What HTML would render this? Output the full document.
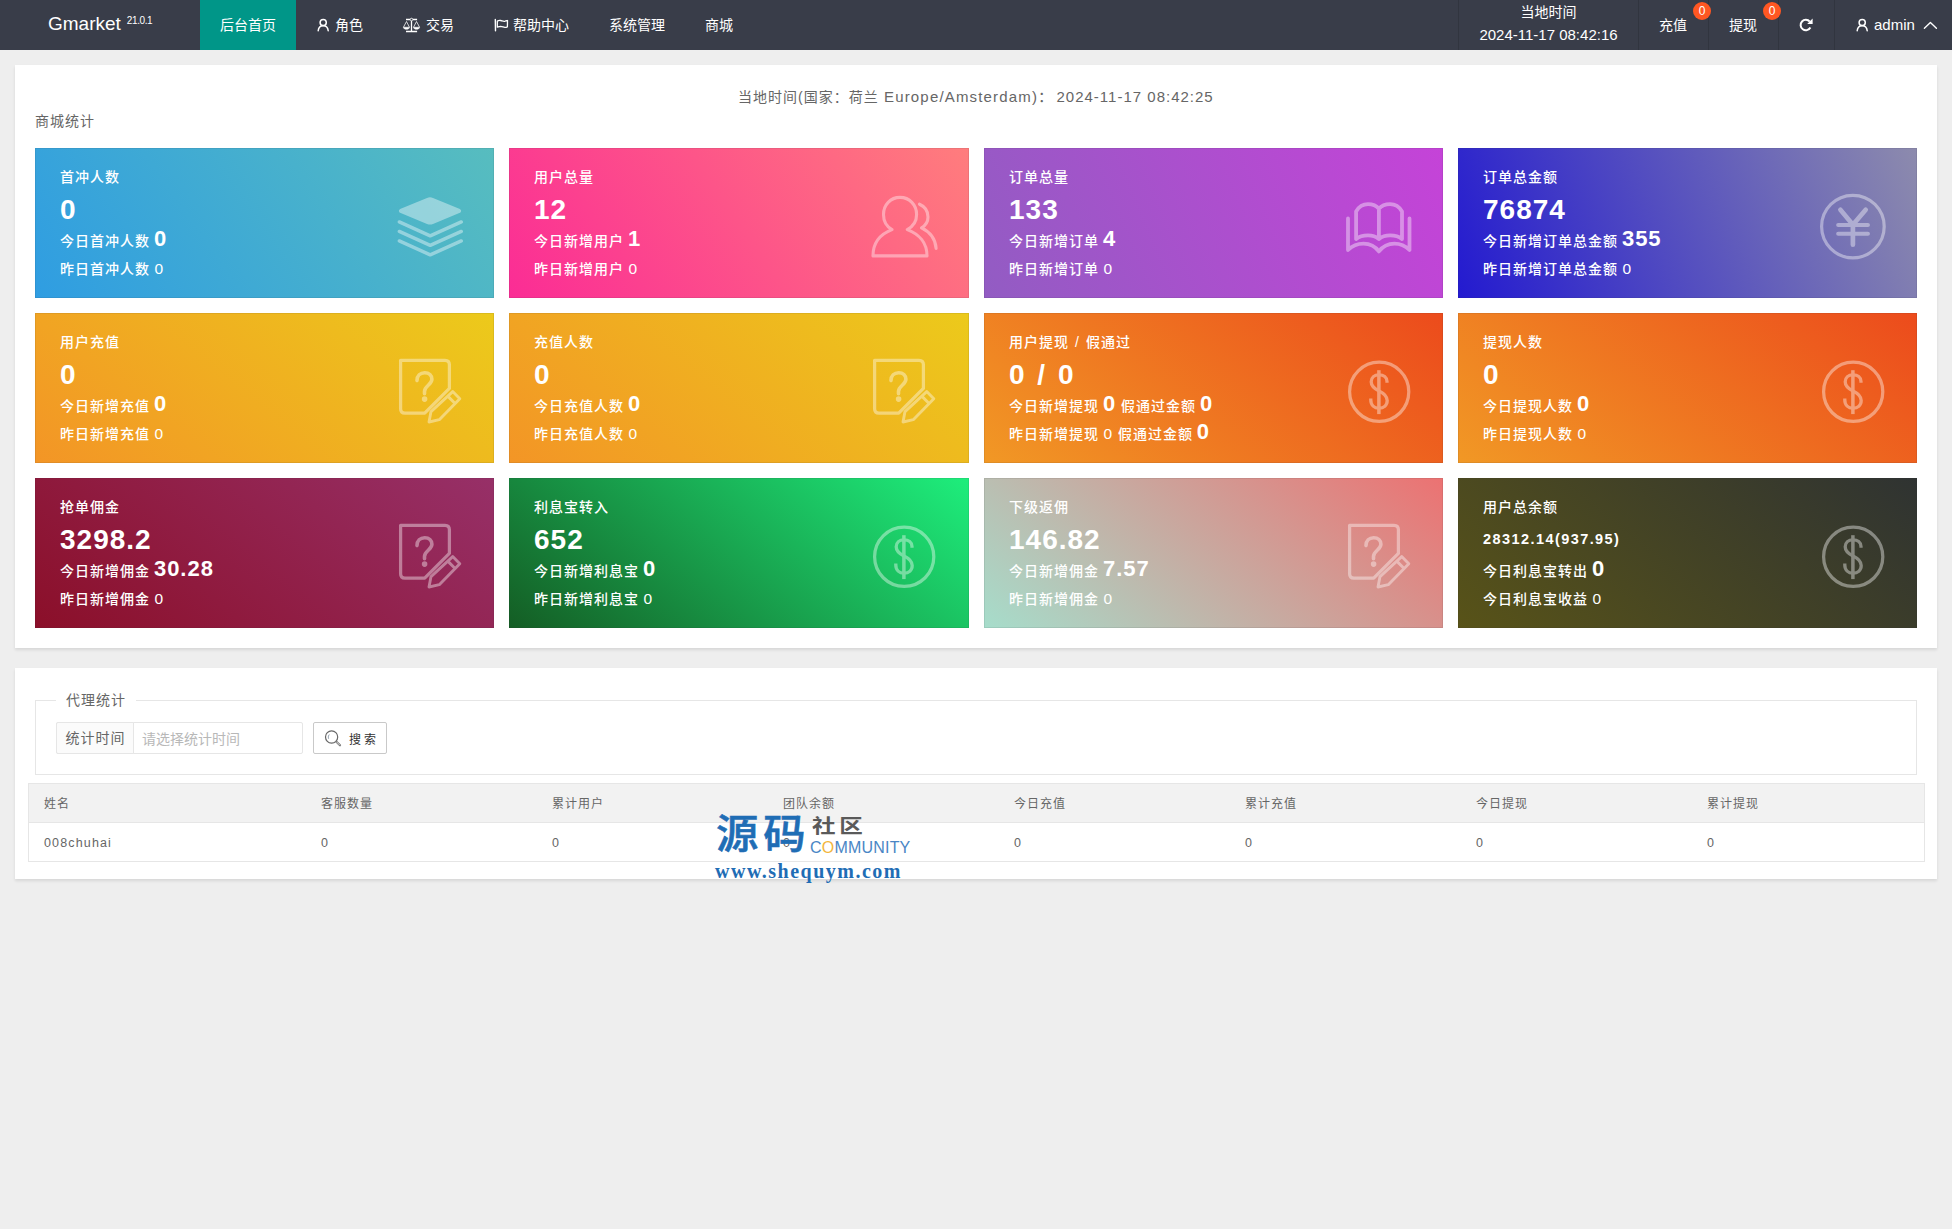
<!DOCTYPE html>
<html lang="zh-CN">
<head>
<meta charset="utf-8">
<title>Gmarket</title>
<style>
*{box-sizing:border-box;margin:0;padding:0}
html,body{width:1952px;height:1229px;overflow:hidden}
body{background:#eeeeee;font-family:"Liberation Sans","Noto Sans CJK SC",sans-serif;font-size:14px;color:#666;position:relative;letter-spacing:1px}
.abs{position:absolute}
/* header */
#hd{position:absolute;left:0;top:0;width:1952px;height:50px;background:#393d49;color:#fff;letter-spacing:0}
#hd .logo{position:absolute;left:48px;top:0;height:50px;line-height:48px;font-size:19px;color:#fff;white-space:nowrap}
#hd .logo sup{font-size:10px;letter-spacing:-.4px;position:relative;top:-6.500px;left:6px;vertical-align:baseline}
#hd .nav{position:absolute;top:0;height:50px;line-height:50px;font-size:14px;color:#fff;white-space:nowrap}
#hd .nav.on{background:#009688;left:200px;width:96px;text-align:center}
#hd .nav svg{position:absolute;top:17px}
#hd .sep{position:absolute;top:0;width:1px;height:50px;background:#31353f}
#hd .badge{position:absolute;top:2px;width:18px;height:18px;border-radius:9px;background:#ff5722;color:#fff;font-size:12px;line-height:18px;text-align:center}
/* panels */
.panel{position:absolute;left:15px;width:1922px;background:#fff;box-shadow:0 2px 3px rgba(0,0,0,.1)}
/* cards */
.card{position:absolute;height:150px;color:#fff;font-weight:500;font-size:14px;box-shadow:inset 0 0 0 1px rgba(45,45,60,.09);letter-spacing:1px;white-space:nowrap;overflow:hidden}
.card .t{position:absolute;left:25px;top:18px;line-height:22px;word-spacing:1.200px}
.card .n{position:absolute;left:25px;top:45px;line-height:34px;font-size:28px;font-weight:bold;word-spacing:3px}
.card .a{position:absolute;left:25px;top:78.5px;line-height:28px}
.card .b{position:absolute;left:25px;top:109px;line-height:24px}
.card b{font-size:22px;font-weight:bold;margin-left:-1px;line-height:0}
.card i{font-style:normal;font-weight:400;font-size:15.500px;margin-left:-.5px;position:relative;top:-.5px}
.card svg{position:absolute;left:355px;top:40px;width:80px;height:80px;opacity:.4}
.card .n.s{font-size:14.500px;letter-spacing:1.430px;top:43.500px}
.th,.td{position:absolute;font-size:12px;letter-spacing:1px;white-space:nowrap;color:#666}
.th{top:0;line-height:41px}
.td{top:40px;line-height:38px;font-size:12.500px;letter-spacing:1.150px}
</style>
</head>
<body>
<div id="hd">
  <div class="logo">Gmarket<sup>21.0.1</sup></div>
  <div class="nav on">后台首页</div>
  <div class="nav" style="left:335px">角色</div>
  <div class="nav" style="left:426px">交易</div>
  <div class="nav" style="left:513px">帮助中心</div>
  <div class="nav" style="left:609px">系统管理</div>
  <div class="nav" style="left:705px">商城</div>
  <svg class="abs" style="left:316px;top:17px" width="15" height="16" viewBox="0 0 15 16" fill="none" stroke="#fff" stroke-width="1.5" stroke-linecap="round"><circle cx="7.200" cy="5.500" r="3.100"/><path d="M2.200 13.700c.3-3.200 2.100-4.900 5-4.900s4.700 1.700 5 4.900"/></svg>
  <svg class="abs" style="left:402px;top:17px" width="20" height="17" viewBox="0 0 20 17" fill="none" stroke="#fff" stroke-linejoin="round"><path d="M4 2.500h4M11 2.500h4.100M9.500 3.900v10.500M4 14.500h11.100" stroke-width="1.300"/><circle cx="9.500" cy="2.500" r="1.250" stroke-width=".9"/><path d="M1.500 10.100 4.500 4.500 7.400 10.100M11.600 10.100 14.500 4.500 17.500 10.100" stroke-width=".85" stroke-opacity=".9"/><path d="M1.300 10.200h6.300c-.3 1.400-1.400 2.100-3.150 2.100s-2.850-.7-3.150-2.100zM11.400 10.200h6.300c-.3 1.400-1.400 2.100-3.150 2.100s-2.850-.7-3.150-2.100z" fill="#fff" stroke-width=".5"/></svg>
  <svg class="abs" style="left:493px;top:17px" width="17" height="16" viewBox="0 0 17 16" fill="none" stroke="#fff" stroke-width="1.300" stroke-linecap="round" stroke-linejoin="round"><path d="M2.300 2.500 2.500 13.700" stroke-width="1.400"/><path d="M4.300 4.100c1.200-.7 2.500-.8 3.400-.6 1.800.5 2.800 1.100 4 .8 1.100-.2 2.100-.6 2.800-.8l-.1 6.300c-.9.400-1.600.7-2.500.6-1.400-.1-2.600-.9-4.200-1-1.200 0-2.400.4-3.400.8z"/></svg>
  <div class="sep" style="left:1458px"></div>
  <div class="sep" style="left:1638px"></div>
  <div class="sep" style="left:1708px"></div>
  <div class="sep" style="left:1778px"></div>
  <div class="sep" style="left:1834px"></div>
  <div class="abs" style="left:1459px;top:0;width:179px;text-align:center;font-size:14px;line-height:24px">当地时间</div>
  <div class="abs" style="left:1459px;top:23px;width:179px;text-align:center;font-size:15px;line-height:24px;white-space:nowrap">2024-11-17 08:42:16</div>
  <div class="nav" style="left:1659px">充值</div>
  <div class="badge" style="left:1693px">0</div>
  <div class="nav" style="left:1729px">提现</div>
  <div class="badge" style="left:1763px">0</div>
  <svg class="abs" style="left:1798px;top:17px" width="16" height="16" viewBox="0 0 16 16" fill="none" stroke="#fff" stroke-width="2" stroke-linecap="butt"><path d="M12.400 10.500a5.200 5.200 0 1 1-.6-5.800"/><path d="M14.600 1.600v5.400h-5.400z" fill="#fff" stroke="none"/></svg>
  <svg class="abs" style="left:1855px;top:17px" width="15" height="16" viewBox="0 0 15 16" fill="none" stroke="#fff" stroke-width="1.5" stroke-linecap="round"><circle cx="7.200" cy="5.500" r="3.100"/><path d="M2.200 13.700c.3-3.200 2.100-4.900 5-4.900s4.700 1.700 5 4.900"/></svg>
  <div class="nav" style="left:1874px;font-size:15px">admin</div>
  <svg class="abs" style="left:1923px;top:21px" width="15" height="9" viewBox="0 0 15 9" fill="none" stroke="#fff" stroke-width="1.400" stroke-linecap="round" stroke-linejoin="round"><path d="M1.400 7.300l6-5.700 6 5.700"/></svg>
</div>
<div class="panel" style="top:65px;height:583px"></div>
<div class="abs" id="lt1" style="left:738px;top:84px;line-height:26px;white-space:nowrap">当地时间(国家：荷兰</div>
<div class="abs" id="lt2" style="left:884px;top:84px;line-height:26px;white-space:nowrap;font-size:15px;letter-spacing:1.170px">Europe/Amsterdam)：</div>
<div class="abs" id="lt3" style="left:1056.500px;top:84px;line-height:26px;white-space:nowrap;font-size:15px;letter-spacing:1px">2024-11-17 08:42:25</div>
<div class="abs" style="left:35px;top:110px;line-height:22px" id="sec1">商城统计</div>
<div class="card" style="left:35px;top:148px;width:459px;background:linear-gradient(-125deg,#57bdbf,#2f9de2)"><div class="t">首冲人数</div><div class="n">0</div><div class="a">今日首冲人数 <b>0</b></div><div class="b">昨日首冲人数 <i>0</i></div><svg viewBox="0 0 80 80"><path d="M10.700 20.700 37 9.900c2-.8 4-.8 6 0l26.300 10.800c2.400 1 2.400 3.400 0 4.400L43 36c-2 .8-4 .8-6 0L10.700 25.100c-2.400-1-2.400-3.400 0-4.400z" fill="#fff"/><path d="M9.300 33.900 40.200 47.900 71.300 33.900M9.300 43.400 40.200 57.400 71.300 43.400M9.300 52.900 40.200 66.900 71.300 52.900" fill="none" stroke="#fff" stroke-width="3.400" stroke-linecap="round" stroke-linejoin="round"/></svg></div>
<div class="card" style="left:509px;top:148px;width:460px;background:linear-gradient(-125deg,#ff7d7d,#fb2c95)"><div class="t">用户总量</div><div class="n">12</div><div class="a">今日新增用户 <b>1</b></div><div class="b">昨日新增用户 <i>0</i></div><svg viewBox="0 0 80 80"><g fill="none" stroke="#fff" stroke-width="3.100" stroke-linecap="round" stroke-linejoin="round"><path d="M28 41.600C22.500 38.500 19.500 33 19.500 26.500 19.500 17 26.500 9.400 36 9.400s16.600 7.600 16.600 17.100c0 6.500-3.600 12-9.300 15.100C55 46 63 55 63 67.900H9C9 55 16.500 46 28 41.600z"/><path d="M55.500 16.200C61 18.500 64 23 64 29c0 4.500-2.500 8.500-6.500 10.900 8.500 4.100 14 11.100 14.600 20.500"/></g></svg></div>
<div class="card" style="left:984px;top:148px;width:459px;background:linear-gradient(-113deg,#c543d8,#925cc3)"><div class="t">订单总量</div><div class="n">133</div><div class="a">今日新增订单 <b>4</b></div><div class="b">昨日新增订单 <i>0</i></div><svg viewBox="0 0 80 80"><g fill="none" stroke="#fff" stroke-width="3.800" stroke-linecap="round" stroke-linejoin="round"><path d="M17.100 51V23.500c2.900-5 7.400-7.300 11.900-7.300s8.400 1.500 10.900 4.600V51c-3-2.500-6.400-3.600-10.900-3.600S20.100 48.500 17.100 51zM63 51V23.500c-2.900-5-7.400-7.300-11.900-7.300s-8.600 1.500-11.200 4.600M39.900 51c3-2.500 6.700-3.600 11.200-3.600S60 48.500 63 51"/><path d="M9 30.500V62c4.500-4.500 10-6.400 15.500-6.400 6.500 0 11.500 2.400 15.400 7.800 4.100-5.400 9.100-7.800 15.600-7.800 5.500 0 10.500 1.900 15 6.400V30.500"/></g></svg></div>
<div class="card" style="left:1458px;top:148px;width:459px;background:linear-gradient(-112deg,#8d8bad,#231ad0)"><div class="t">订单总金额</div><div class="n">76874</div><div class="a">今日新增订单总金额 <b>355</b></div><div class="b">昨日新增订单总金额 <i>0</i></div><svg viewBox="0 0 80 80"><g fill="none" stroke="#fff" stroke-linecap="round" stroke-linejoin="round"><circle cx="39.900" cy="38.600" r="31.300" stroke-width="3.200"/><path d="M27.400 21.700 39.900 36.700 52.700 21.700M39.900 36.700V56.700" stroke-width="4.700"/><path d="M25.200 37H54.900M25.200 45.800H54.900" stroke-width="4.100"/></g></svg></div>
<div class="card" style="left:35px;top:313px;width:459px;background:linear-gradient(-141deg,#ecca1b,#f39526)"><div class="t">用户充值</div><div class="n">0</div><div class="a">今日新增充值 <b>0</b></div><div class="b">昨日新增充值 <i>0</i></div><svg viewBox="0 0 80 80"><g fill="none" stroke="#fff" stroke-linejoin="round"><path d="M10.600 7.400H55c2.900 0 4.400 1.500 4.400 4.400V35.400L34.700 60.100H15c-2.900 0-4.400-1.500-4.400-4.400z" stroke-width="3.250"/><path d="M27 27.600c0-4.800 3.300-7.800 7.700-7.800s7.200 2.800 7.200 6.500c0 5.500-7.400 6.500-7.400 12.200v2.300" stroke-width="3.600" stroke-linecap="round"/><path d="M62.700 38.600 69.800 45.800 49.300 66.700 39 69l2-10.400zM58 43.400l7.100 7.100" stroke-width="2.900"/></g><circle cx="34.600" cy="46.100" r="2.800" fill="#fff"/></svg></div>
<div class="card" style="left:509px;top:313px;width:460px;background:linear-gradient(-141deg,#ecca1b,#f39526)"><div class="t">充值人数</div><div class="n">0</div><div class="a">今日充值人数 <b>0</b></div><div class="b">昨日充值人数 <i>0</i></div><svg viewBox="0 0 80 80"><g fill="none" stroke="#fff" stroke-linejoin="round"><path d="M10.600 7.400H55c2.900 0 4.400 1.500 4.400 4.400V35.400L34.700 60.100H15c-2.900 0-4.400-1.500-4.400-4.400z" stroke-width="3.250"/><path d="M27 27.600c0-4.800 3.300-7.800 7.700-7.800s7.200 2.800 7.200 6.500c0 5.500-7.400 6.500-7.400 12.200v2.300" stroke-width="3.600" stroke-linecap="round"/><path d="M62.700 38.600 69.800 45.800 49.300 66.700 39 69l2-10.400zM58 43.400l7.100 7.100" stroke-width="2.900"/></g><circle cx="34.600" cy="46.100" r="2.800" fill="#fff"/></svg></div>
<div class="card" style="left:984px;top:313px;width:459px;background:linear-gradient(-141deg,#ec4b1c,#f19825)"><div class="t">用户提现 / 假通过</div><div class="n">0 / 0</div><div class="a">今日新增提现 <b>0</b> 假通过金额 <b>0</b></div><div class="b">昨日新增提现 <i>0</i> 假通过金额 <b>0</b></div><svg viewBox="0 0 80 80"><g fill="none" stroke="#fff"><circle cx="40.200" cy="38.800" r="29.600" stroke-width="3.250"/><path d="M39.900 17.200V61.100" stroke-width="3.500"/><path d="M48 29.700v-1.200C48 24.300 44.500 21.800 40 21.800s-7.800 2.700-7.800 7c0 4.700 3.300 7 7.800 9.200s8.200 4.500 8.200 9.500c0 4.800-3.700 7.700-8.200 7.700s-8.200-2.900-8.200-8.200v-1.500" stroke-width="3.300"/></g></svg></div>
<div class="card" style="left:1458px;top:313px;width:459px;background:linear-gradient(-141deg,#ec4b1c,#f19825)"><div class="t">提现人数</div><div class="n">0</div><div class="a">今日提现人数 <b>0</b></div><div class="b">昨日提现人数 <i>0</i></div><svg viewBox="0 0 80 80"><g fill="none" stroke="#fff"><circle cx="40.200" cy="38.800" r="29.600" stroke-width="3.250"/><path d="M39.900 17.200V61.100" stroke-width="3.500"/><path d="M48 29.700v-1.200C48 24.300 44.500 21.800 40 21.800s-7.800 2.700-7.800 7c0 4.700 3.300 7 7.800 9.200s8.200 4.500 8.200 9.500c0 4.800-3.700 7.700-8.200 7.700s-8.200-2.900-8.200-8.200v-1.500" stroke-width="3.300"/></g></svg></div>
<div class="card" style="left:35px;top:478px;width:459px;background:linear-gradient(-141deg,#973068,#8b0f29)"><div class="t">抢单佣金</div><div class="n">3298.2</div><div class="a">今日新增佣金 <b>30.28</b></div><div class="b">昨日新增佣金 <i>0</i></div><svg viewBox="0 0 80 80"><g fill="none" stroke="#fff" stroke-linejoin="round"><path d="M10.600 7.400H55c2.900 0 4.400 1.500 4.400 4.400V35.400L34.700 60.100H15c-2.900 0-4.400-1.500-4.400-4.400z" stroke-width="3.250"/><path d="M27 27.600c0-4.800 3.300-7.800 7.700-7.800s7.200 2.800 7.200 6.500c0 5.500-7.400 6.500-7.400 12.200v2.300" stroke-width="3.600" stroke-linecap="round"/><path d="M62.700 38.600 69.800 45.800 49.300 66.700 39 69l2-10.400zM58 43.400l7.100 7.100" stroke-width="2.900"/></g><circle cx="34.600" cy="46.100" r="2.800" fill="#fff"/></svg></div>
<div class="card" style="left:509px;top:478px;width:460px;background:linear-gradient(-141deg,#1eee7c,#145d24)"><div class="t">利息宝转入</div><div class="n">652</div><div class="a">今日新增利息宝 <b>0</b></div><div class="b">昨日新增利息宝 <i>0</i></div><svg viewBox="0 0 80 80"><g fill="none" stroke="#fff"><circle cx="40.200" cy="38.800" r="29.600" stroke-width="3.250"/><path d="M39.900 17.200V61.100" stroke-width="3.500"/><path d="M48 29.700v-1.200C48 24.300 44.500 21.800 40 21.800s-7.800 2.700-7.800 7c0 4.700 3.300 7 7.800 9.200s8.200 4.500 8.200 9.500c0 4.800-3.700 7.700-8.200 7.700s-8.200-2.900-8.200-8.200v-1.500" stroke-width="3.300"/></g></svg></div>
<div class="card" style="left:984px;top:478px;width:459px;background:linear-gradient(-141deg,#ec7272,#a6ddcb)"><div class="t">下级返佣</div><div class="n">146.82</div><div class="a">今日新增佣金 <b>7.57</b></div><div class="b">昨日新增佣金 <i>0</i></div><svg viewBox="0 0 80 80"><g fill="none" stroke="#fff" stroke-linejoin="round"><path d="M10.600 7.400H55c2.900 0 4.400 1.500 4.400 4.400V35.400L34.700 60.100H15c-2.900 0-4.400-1.500-4.400-4.400z" stroke-width="3.250"/><path d="M27 27.600c0-4.800 3.300-7.800 7.700-7.800s7.200 2.800 7.200 6.500c0 5.500-7.400 6.500-7.400 12.200v2.300" stroke-width="3.600" stroke-linecap="round"/><path d="M62.700 38.600 69.800 45.800 49.300 66.700 39 69l2-10.400zM58 43.400l7.100 7.100" stroke-width="2.900"/></g><circle cx="34.600" cy="46.100" r="2.800" fill="#fff"/></svg></div>
<div class="card" style="left:1458px;top:478px;width:459px;background:linear-gradient(-141deg,#2f3332,#585318)"><div class="t">用户总余额</div><div class="n s">28312.14(937.95)</div><div class="a">今日利息宝转出 <b>0</b></div><div class="b">今日利息宝收益 <i>0</i></div><svg viewBox="0 0 80 80"><g fill="none" stroke="#fff"><circle cx="40.200" cy="38.800" r="29.600" stroke-width="3.250"/><path d="M39.900 17.200V61.100" stroke-width="3.500"/><path d="M48 29.700v-1.200C48 24.300 44.500 21.800 40 21.800s-7.800 2.700-7.800 7c0 4.700 3.300 7 7.800 9.200s8.200 4.500 8.200 9.500c0 4.800-3.700 7.700-8.200 7.700s-8.200-2.900-8.200-8.200v-1.500" stroke-width="3.300"/></g></svg></div>
<div class="panel" style="top:668px;height:211px"></div>
<div class="abs" id="fs" style="left:35px;top:700px;width:1882px;height:75px;border:1px solid #e6e6e6"></div>
<div class="abs" id="lg" style="left:56px;top:689px;width:80px;height:22px;line-height:22px;background:#fff;padding-left:10px;white-space:nowrap">代理统计</div>
<div class="abs" id="ig" style="left:56px;top:722px;width:247px;height:32px;border:1px solid #e6e6e6;border-radius:2px;background:#fff"></div>
<div class="abs" id="igl" style="left:56px;top:722px;width:78px;height:32px;border:1px solid #e6e6e6;border-radius:2px 0 0 2px;background:#fbfbfb;line-height:30px;text-align:center;white-space:nowrap;padding-left:1px">统计时间</div>
<div class="abs" id="igp" style="left:142px;top:724px;line-height:30px;color:#b8b8b8;letter-spacing:0;white-space:nowrap">请选择统计时间</div>
<div class="abs" id="btn" style="left:313px;top:722px;width:74px;height:32px;border:1px solid #c9c9c9;border-radius:2px;background:#fff"></div>
<svg class="abs" style="left:323px;top:729px" width="20" height="20" viewBox="0 0 20 20" fill="none" stroke="#666" stroke-width="1.200" stroke-linecap="round"><circle cx="8.600" cy="8" r="6.100"/><path d="M13.400 12.700 17 16.300" stroke-width="2.200" stroke="#777"/><path d="M13.800 13.100 16.600 15.900" stroke-width=".7" stroke="#fff"/><path d="M5.500 9.300c-.4-1.400-.1-2.600.5-3.400" stroke-width=".9" stroke="#789"/></svg>
<div class="abs" id="btnt" style="left:349px;top:724.500px;line-height:30px;font-size:12px;color:#333;letter-spacing:3px;white-space:nowrap">搜索</div>
<div class="abs" id="tb" style="left:28px;top:783px;width:1897px;height:79px;border:1px solid #e6e6e6;background:#fff">
<div class="abs" style="left:0;top:0;width:1895px;height:39px;background:#f2f2f2;border-bottom:1px solid #e6e6e6"></div>
<div class="th" style="left:15px">姓名</div><div class="th" style="left:292px">客服数量</div><div class="th" style="left:523px">累计用户</div><div class="th" style="left:754px">团队余额</div><div class="th" style="left:985px">今日充值</div><div class="th" style="left:1216px">累计充值</div><div class="th" style="left:1447px">今日提现</div><div class="th" style="left:1678px">累计提现</div>
<div class="td" style="left:15px">008chuhai</div><div class="td" style="left:292px">0</div><div class="td" style="left:523px">0</div><div class="td" style="left:754px">0</div><div class="td" style="left:985px">0</div><div class="td" style="left:1216px">0</div><div class="td" style="left:1447px">0</div><div class="td" style="left:1678px">0</div>
</div>
<div class="abs" id="wm1" style="left:716px;top:808px;-webkit-text-stroke:.6px #1f6db5;font-family:'Liberation Sans','Noto Sans CJK SC',sans-serif;font-weight:500;font-size:40px;line-height:52px;color:#1f6db5;letter-spacing:4.500px;white-space:nowrap;transform:scaleX(1.06);transform-origin:0 0">源码</div>
<div class="abs" id="wm2" style="left:811.500px;top:813.200px;font-family:'Liberation Sans','Noto Sans CJK SC',sans-serif;font-weight:700;font-size:19px;line-height:28px;color:#5a5a5a;letter-spacing:3px;white-space:nowrap;transform:scaleX(1.24);transform-origin:0 0">社区</div>
<div class="abs" id="wm3" style="left:810px;top:838px;font-size:16px;line-height:20px;color:#4a86c5;letter-spacing:.2px;white-space:nowrap">C<span style="color:#f2b63c">O</span>MMUNITY</div>
<div class="abs" id="wm4" style="left:715px;top:857.500px;font-family:'Liberation Serif',serif;font-weight:bold;font-size:20px;line-height:26px;color:#1f6db5;letter-spacing:1.500px;white-space:nowrap">www.shequym.com</div>
</body>
</html>
